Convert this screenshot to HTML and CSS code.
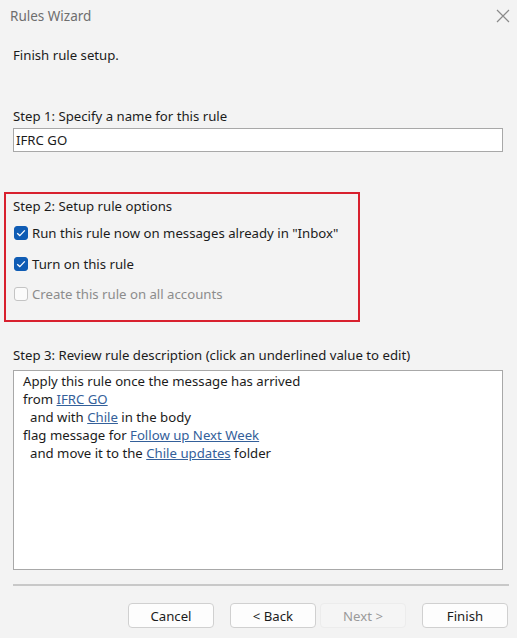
FILE: index.html
```html
<!DOCTYPE html>
<html lang="en">
<head>
<meta charset="UTF-8">
<meta name="viewport" content="width=device-width, initial-scale=1.0">
<title>Rules Wizard</title>
<link rel="stylesheet" href="styles.css">
</head>
<body>

<div class="titlebar">
  <span class="title">Rules Wizard</span>
  <svg class="close" width="14" height="14" viewBox="0 0 14 14">
    <path d="M1 1 L13 13 M13 1 L1 13" stroke="#8a8a8a" stroke-width="1.2" fill="none"/>
  </svg>
</div>

<div class="content">
  <p class="intro">Finish rule setup.</p>

  <p class="step step-one">Step 1: Specify a name for this rule</p>
  <div class="name-input">IFRC GO</div>

  <!-- highlighted options -->
  <div class="options">
    <p class="step">Step 2: Setup rule options</p>
    <div class="option">
      <span class="checkbox checked">
        <svg width="10" height="8" viewBox="0 0 10 8"><path d="M1.2 4.2 L3.8 6.6 L8.8 1.4" stroke="#fff" stroke-width="1.3" fill="none"/></svg>
      </span>
      Run this rule now on messages already in "Inbox"
    </div>
    <div class="option">
      <span class="checkbox checked">
        <svg width="10" height="8" viewBox="0 0 10 8"><path d="M1.2 4.2 L3.8 6.6 L8.8 1.4" stroke="#fff" stroke-width="1.3" fill="none"/></svg>
      </span>
      Turn on this rule
    </div>
    <div class="option disabled">
      <span class="checkbox"></span>
      Create this rule on all accounts
    </div>
  </div>

  <p class="step step-three">Step 3: Review rule description (click an underlined value to edit)</p>
  <div class="description">
    <div>Apply this rule once the message has arrived</div>
    <div>from <a href="#">IFRC GO</a></div>
    <div class="indent">and with <a href="#">Chile</a> in the body</div>
    <div>flag message for <a href="#">Follow up Next Week</a></div>
    <div class="indent">and move it to the <a href="#">Chile updates</a> folder</div>
  </div>

  <div class="separator"></div>

  <div class="buttons">
    <button class="btn">Cancel</button>
    <button class="btn back">&lt; Back</button>
    <button class="btn next" disabled>Next &gt;</button>
    <button class="btn finish">Finish</button>
  </div>
</div>

</body>
</html>
```

FILE: styles.css
```css
body {
  margin: 0;
  font-family: "Noto Sans", "Open Sans", sans-serif;
  font-size: 13.2px;
  color: #1b1b1b;
  background-color: #f3f3f3;
  width: 517px;
  height: 638px;
  overflow: hidden;
}

p {
  margin: 0;
  line-height: 18px;
}

.titlebar {
  height: 32px;
  display: flex;
  align-items: center;
  justify-content: space-between;
  padding: 0 7px 0 10px;
}

.title {
  font-size: 13.5px;
  color: #6e6e6e;
}

.content {
  padding: 14px 0 0 13px;
}

.step-one {
  margin-top: 43px;
}

.name-input {
  margin-top: 3px;
  height: 22px;
  line-height: 22px;
  border: 1px solid #a8a8a8;
  background-color: #fff;
  padding-left: 2px;
  width: 486px;
}

.options {
  margin: 40px 0 0 -9px;
  width: 345px;
  height: 123px;
  border: 2px solid #d8202e;
  padding: 3px 0 0 7px;
}

.option {
  display: flex;
  align-items: center;
  gap: 4px;
  height: 18px;
  margin-top: 9px;
  line-height: 18px;
}

.option + .option {
  margin-top: 12.5px;
}

.checkbox {
  width: 14px;
  height: 14px;
  box-sizing: border-box;
  border-radius: 3px;
  border: 1px solid #c4c4c4;
  background-color: #fbfbfb;
  display: flex;
  align-items: center;
  justify-content: center;
  margin-left: 1px;
}

.checkbox.checked {
  background-color: #0f5cb4;
  border-color: #0f5cb4;
}

.disabled {
  color: #8c8c8c;
}

.step-three {
  margin-top: 24px;
}

.description {
  margin-top: 6px;
  width: 479px;
  height: 190px;
  border: 1px solid #a8a8a8;
  background-color: #fff;
  padding: 1px 0 7px 9px;
  line-height: 18px;
}

.indent {
  padding-left: 7px;
}

.description a {
  color: #34609a;
}

.separator {
  margin-top: 14px;
  width: 496px;
  height: 2px;
  background-color: #c8c8c8;
}

.buttons {
  display: flex;
  justify-content: flex-end;
  padding-right: 9px;
  margin-top: 17px;
}

.btn {
  font-family: inherit;
  font-size: 13.2px;
  color: #1b1b1b;
  width: 86px;
  height: 25px;
  border: 1px solid #d0d0d0;
  border-radius: 4px;
  background-color: #fdfdfd;
  padding: 0;
}

.back {
  margin-left: 16px;
}

.next {
  margin-left: 4px;
  color: #9a9a9a;
  background-color: #f5f5f5;
  border-color: #ececec;
}

.finish {
  margin-left: 16px;
}
```
